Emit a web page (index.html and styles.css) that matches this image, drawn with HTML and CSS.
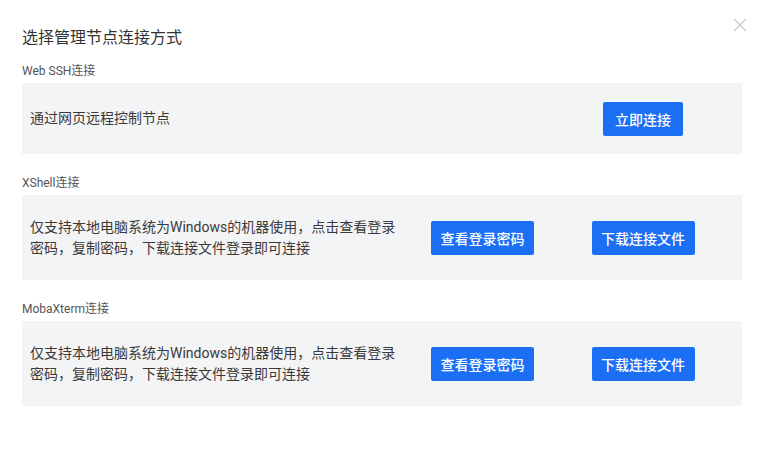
FILE: index.html
```html
<!DOCTYPE html>
<html lang="zh-CN">
<head>
<meta charset="utf-8">
<title>选择管理节点连接方式</title>
<link rel="stylesheet" href="styles.css">
</head>
<body>
<div class="dialog">
  <button class="close" aria-label="关闭">
    <svg width="14" height="14" viewBox="0 0 14 14"><path d="M1 1L13 13M13 1L1 13" stroke="#cbcbcb" stroke-width="1.4" fill="none"/></svg>
  </button>
  <h1 class="title">选择管理节点连接方式</h1>

  <section class="section">
    <div class="label">Web SSH连接</div>
    <div class="box">
      <div class="desc wide">通过网页远程控制节点</div>
      <div class="cell-last"><button class="btn btn-sm">立即连接</button></div>
    </div>
  </section>

  <section class="section">
    <div class="label">XShell连接</div>
    <div class="box">
      <div class="desc">仅支持本地电脑系统为Windows的机器使用，点击查看登录密码，复制密码，下载连接文件登录即可连接</div>
      <div class="cell-mid"><button class="btn">查看登录密码</button></div>
      <div class="cell-last"><button class="btn">下载连接文件</button></div>
    </div>
  </section>

  <section class="section">
    <div class="label">MobaXterm连接</div>
    <div class="box">
      <div class="desc">仅支持本地电脑系统为Windows的机器使用，点击查看登录密码，复制密码，下载连接文件登录即可连接</div>
      <div class="cell-mid"><button class="btn">查看登录密码</button></div>
      <div class="cell-last"><button class="btn">下载连接文件</button></div>
    </div>
  </section>
</div>
</body>
</html>
```

FILE: styles.css
```css
* { box-sizing: border-box; }
html, body {
  margin: 0;
  background: #fff;
  font-family: Roboto, "Liberation Sans", "Noto Sans CJK SC", sans-serif;
  color: #333;
}
.dialog {
  position: relative;
  width: 764px;
  height: 458px;
  padding: 26px 22px 0 22px;
}
.close {
  position: absolute;
  top: 18px;
  left: 733px;
  width: 14px;
  height: 14px;
  padding: 0;
  border: 0;
  background: none;
  line-height: 0;
}
.title {
  margin: 0 0 12px 0;
  font-size: 16px;
  line-height: 24px;
  font-weight: 400;
  color: #333;
}
.section { margin-bottom: 20px; }
.label {
  font-size: 12px;
  line-height: 18px;
  margin-bottom: 3px;
  color: #555;
}
.box {
  display: grid;
  grid-template-columns: 401px 103px 1fr;
  align-items: center;
  background: #f3f4f6;
  padding: 0 0 0 8px;
  min-height: 85px;
}
.section:first-of-type .box { min-height: 71px; }
.desc {
  width: 372px;
  font-size: 14px;
  line-height: 21px;
  color: #3a3a3a;
}
.desc.wide { grid-column: 1 / 3; }
.cell-mid { display: flex; }
.cell-last {
  display: flex;
  justify-content: center;
  padding-left: 10px;
}
.btn {
  height: 34px;
  width: 103px;
  padding: 0;
  border: 0;
  border-radius: 2px;
  background: #1a6ff5;
  color: #fff;
  font-family: "Noto Sans CJK SC", sans-serif;
  font-size: 14px;
  font-weight: 500;
}
.btn-sm { width: 80px; }
```
